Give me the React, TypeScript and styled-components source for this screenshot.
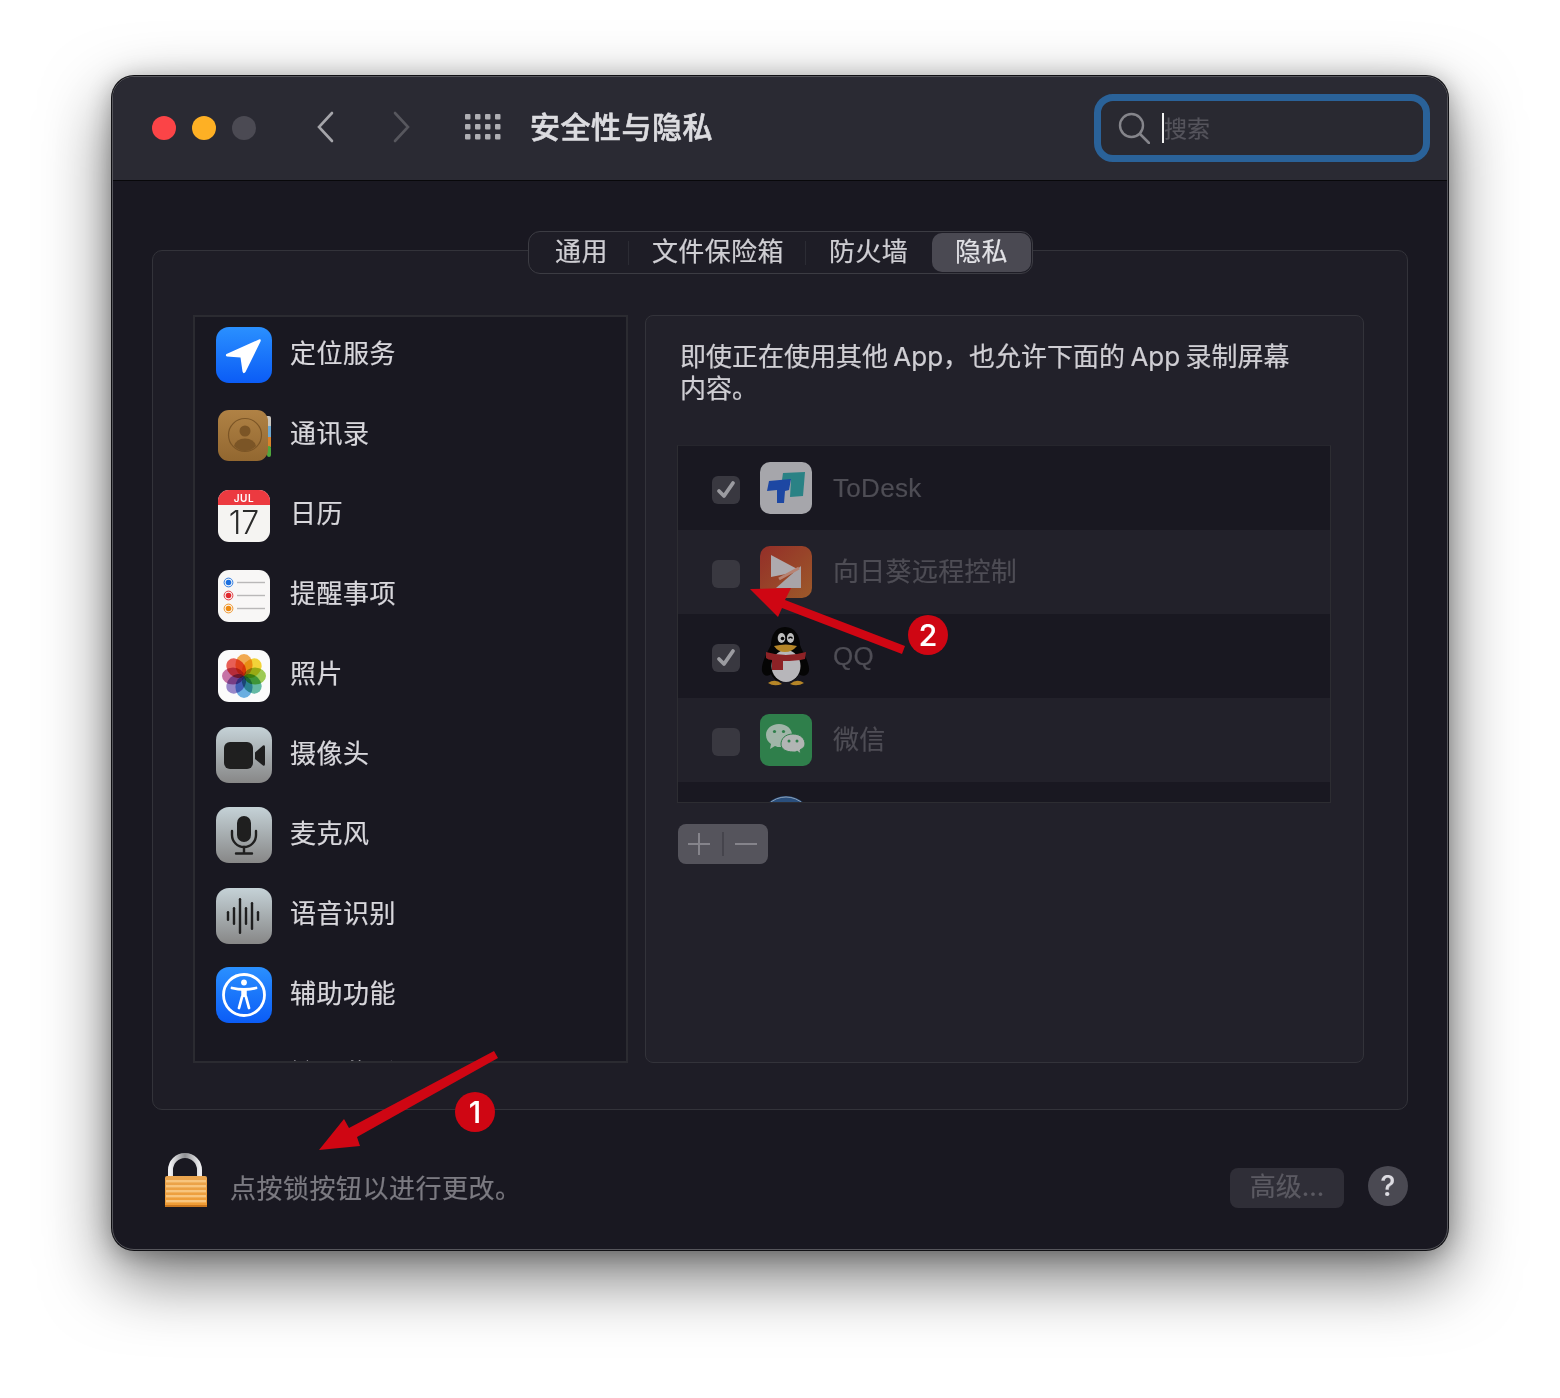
import React from 'react';
import styled, { createGlobalStyle } from 'styled-components';

const GlobalStyle = createGlobalStyle`
  * { box-sizing: border-box; }
  html, body { margin: 0; background: #fff; }
  body { font-family: Inter, "Noto Sans CJK SC", sans-serif; -webkit-text-stroke: 0.2px; }
`;

const Page = styled.div`
  width: 1560px;
  height: 1398px;
  padding: 76px 112px 0;
  overflow: hidden;
  background: #fff;
`;

const Window = styled.div`
  position: relative;
  display: flex;
  flex-direction: column;
  width: 1336px;
  height: 1174px;
  border: 1px solid #56565c;
  border-radius: 22px;
  background: #191821;
  box-shadow: 0 0 0 1px #101014, 0 26px 68px rgba(0, 0, 0, 0.55), 0 4px 24px rgba(0, 0, 0, 0.3);
`;

const TitleBar = styled.header`
  display: flex;
  align-items: center;
  flex: none;
  height: 104px;
  padding: 0 17px 2px 39px;
  background: #2a2a33;
  border-bottom: 1px solid #08080a;
  border-radius: 21px 21px 0 0;
`;

const Lights = styled.div`
  display: flex;
  gap: 16px;
  margin: 1px 60px 0 0;
`;

const Light = styled.span<{ $color: string }>`
  width: 24px;
  height: 24px;
  border-radius: 50%;
  background: ${(p) => p.$color};
`;

const NavButton = styled.svg<{ $gap: number }>`
  flex: none;
  display: block;
  margin: -1px ${(p) => p.$gap}px 0 0;
`;

const Title = styled.h1`
  margin: -2px 0 0 29px;
  font-size: 30px;
  line-height: 40px;
  font-weight: 500;
  letter-spacing: 0.5px;
  color: #dcdce0;
  -webkit-text-stroke: 0.6px #dcdce0;
`;

const Search = styled.div`
  display: flex;
  align-items: center;
  width: 336px;
  height: 68px;
  margin-left: auto;
  padding-left: 17px;
  border: 7px solid #2a6299;
  border-radius: 19px;
  background: #292931;
`;

const SearchGlyph = styled.svg`
  flex: none;
  display: block;
`;

const Caret = styled.span`
  width: 2px;
  height: 30px;
  margin: 0 0 0 12px;
  background: #f2f2f2;
`;

const SearchHint = styled.span`
  font-size: 23px;
  line-height: 30px;
  margin-top: 2px;
  color: #55545c;
`;

const Content = styled.main`
  flex: 1;
  display: flex;
  flex-direction: column;
  padding: 69px 39px 0;
`;

const Panel = styled.section`
  display: flex;
  flex-direction: column;
  align-items: center;
  width: 1256px;
  height: 860px;
  border: 1px solid #33333a;
  border-radius: 10px;
  background: #1e1d26;
`;

const Tabs = styled.nav`
  display: flex;
  align-items: center;
  flex: none;
  height: 43px;
  margin: -20px 0 0 1px;
  padding: 0 1px;
  border: 1px solid #3c3c43;
  border-radius: 12px;
  background: #1e1d26;
`;

const Tab = styled.span<{ $active?: boolean; $divider?: boolean; $pad: string }>`
  position: relative;
  height: 39px;
  padding: ${(p) => p.$pad};
  font-size: 26px;
  line-height: 37px;
  letter-spacing: 0.4px;
  color: ${(p) => (p.$active ? '#e2e2e6' : '#cfced3')};
  background: ${(p) => (p.$active ? '#4a4952' : 'transparent')};
  border-radius: 10px;
  ${(p) =>
    p.$divider &&
    `&::after {
      content: '';
      position: absolute;
      right: 0;
      top: 8px;
      height: 24px;
      width: 1px;
      background: #2c2c34;
    }`}
`;

const Columns = styled.div`
  display: flex;
  gap: 17px;
  width: 100%;
  height: 748px;
  margin-top: 41px;
  padding: 0 43px 0 40px;
`;

const PrivacyList = styled.ul`
  flex: none;
  width: 435px;
  height: 748px;
  margin: 0;
  padding: 0;
  list-style: none;
  overflow: hidden;
  border: 2px solid #2b2b31;
  background: #191821;
`;

const PrivacyRow = styled.li`
  display: flex;
  align-items: center;
  gap: 18px;
  height: 80px;
  padding-left: 21px;

  &:first-child {
    margin-top: -2px;
  }
`;

const RowIcon = styled.svg`
  flex: none;
  display: block;
  overflow: visible;
`;

const RowLabel = styled.span`
  font-size: 26px;
  line-height: 32px;
  letter-spacing: 0.5px;
  margin-top: -2px;
  color: #d8d7dc;
`;

const Detail = styled.div`
  flex: 1;
  height: 748px;
  border: 1px solid #33333a;
  border-radius: 8px;
  background: #22212a;
  padding: 25px 0 0 31px;
`;

const Explain = styled.p`
  margin: 0 0 0 3px;
  width: 624px;
  font-size: 26px;
  line-height: 32px;
  word-spacing: -2px;
  color: #d0cfd4;
`;

const AppTable = styled.div`
  width: 654px;
  height: 358px;
  margin-top: 40px;
  overflow: hidden;
  border: 1px solid #2d2d32;
  border-top-color: #26262d;
  background: #191821;
`;

const AppRow = styled.div<{ $alt?: boolean }>`
  display: flex;
  align-items: center;
  height: 84px;
  padding-left: 34px;
  background: ${(p) => (p.$alt ? '#22212a' : '#191821')};
`;

const Check = styled.span`
  display: flex;
  align-items: center;
  justify-content: center;
  flex: none;
  width: 28px;
  height: 28px;
  margin: 3px 20px 0 0;
  border-radius: 6px;
  background: #393840;
`;

const CheckSpacer = styled.span`
  flex: none;
  width: 48px;
`;

const AppName = styled.span`
  margin: 0 0 0 21px;
  font-family: "Liberation Sans", "Noto Sans CJK SC", sans-serif;
  font-size: 26px;
  line-height: 32px;
  letter-spacing: 0.3px;
  color: #4e4d55;
`;

const PlusMinus = styled.svg`
  display: block;
  width: 90px;
  height: 40px;
  margin: 21px 0 0 1px;
  border-radius: 8px;
  background: #55545c;
`;

const Footer = styled.footer`
  flex: 1;
  display: flex;
  align-items: flex-start;
  padding: 43px 0 0 13px;
`;

const LockGlyph = styled.svg`
  flex: none;
  display: block;
`;

const LockHint = styled.span`
  margin: 20px 0 0 23px;
  font-size: 26px;
  line-height: 32px;
  letter-spacing: 0.5px;
  color: #7c7b82;
`;

const Advanced = styled.span`
  width: 114px;
  height: 40px;
  margin: 15px 0 0 auto;
  border-radius: 8px;
  background: #2f2e37;
  font-size: 26px;
  line-height: 37px;
  text-align: center;
  color: #5b5a62;
`;

const Help = styled.span`
  width: 40px;
  height: 40px;
  margin: 13px 0 0 24px;
  border-radius: 50%;
  background: #4a4952;
  font-size: 28px;
  font-weight: 500;
  line-height: 40px;
  text-align: center;
  color: #dddce2;
`;

// the two red callouts drawn on top of the screenshot
const Callout = styled.svg`
  position: absolute;
  left: 0;
  top: 0;
  pointer-events: none;
`;

const Badge = styled.span<{ $left: number; $top: number }>`
  position: absolute;
  left: ${(p) => p.$left}px;
  top: ${(p) => p.$top}px;
  width: 40px;
  height: 40px;
  border-radius: 50%;
  background: #cf0613;
  font-size: 30px;
  font-weight: 500;
  line-height: 40px;
  text-align: center;
  color: #fff;
`;

const LocationIcon = () => (
  <RowIcon width="56" height="56" viewBox="0 0 56 56">
    <defs>
      <linearGradient id="blue" x1="0" y1="0" x2="0" y2="1">
        <stop offset="0" stopColor="#2a90ff" />
        <stop offset="1" stopColor="#0b5cf6" />
      </linearGradient>
    </defs>
    <rect width="56" height="56" rx="13" fill="url(#blue)" />
    <path d="M10.5 27 L43 12.5 Q45.5 11.8 44.5 14.5 L29.5 45 Q27.5 47.5 26.5 44.5 L24.5 30.5 L11 29.5 Q9 28.5 10.5 27Z" fill="#fff" />
  </RowIcon>
);

const ContactsIcon = () => (
  <RowIcon width="56" height="56" viewBox="0 -3 56 56">
    <defs>
      <linearGradient id="leather" x1="0" y1="0" x2="0" y2="1">
        <stop offset="0" stopColor="#b08245" />
        <stop offset="1" stopColor="#926730" />
      </linearGradient>
    </defs>
    <rect x="48" y="6" width="7" height="12" rx="2" fill="#c9c5bd" />
    <rect x="51" y="16" width="4" height="12" fill="#6fa8d0" />
    <rect x="51" y="27" width="4" height="10" fill="#d9822b" />
    <rect x="51" y="36" width="4" height="11" rx="2" fill="#4fa63c" />
    <rect x="2" y="0" width="50" height="51" rx="11" fill="url(#leather)" />
    <circle cx="29" cy="25" r="16.5" fill="none" stroke="#7b5526" strokeWidth="1.2" />
    <circle cx="29" cy="21" r="5.5" fill="#7b5526" />
    <path d="M18 36 Q20 28.5 29 28.5 Q38 28.5 40 36 Q35 41 29 41 Q23 41 18 36Z" fill="#7b5526" />
  </RowIcon>
);

const CalendarIcon = () => (
  <RowIcon width="56" height="56" viewBox="0 -1 56 56">
    <rect x="2" y="2" width="52" height="52" rx="11" fill="#f5f4f2" />
    <path d="M2 17 V13 a11 11 0 0 1 11 -11 H43 a11 11 0 0 1 11 11 V17Z" fill="#ec3a40" />
    <text x="28" y="13.5" textAnchor="middle" fontSize="10" fontWeight="600" letterSpacing="0.6" fill="#fff" fontFamily="Inter, sans-serif">JUL</text>
    <text x="28" y="46" textAnchor="middle" fontSize="32" fontWeight="300" fill="#2b2b2b" fontFamily="Inter, sans-serif">17</text>
  </RowIcon>
);

const RemindersIcon = () => (
  <RowIcon width="56" height="56" viewBox="0 -1 56 56">
    <rect x="2" y="2" width="52" height="52" rx="11" fill="#f8f7f6" />
    {[
      { y: 14.5, c: '#1a6fe0' },
      { y: 27.5, c: '#e0282e' },
      { y: 40.5, c: '#ee8a12' },
    ].map((r) => (
      <g key={r.y}>
        <circle cx="12.5" cy={r.y} r="2.8" fill={r.c} />
        <circle cx="12.5" cy={r.y} r="4.4" fill="none" stroke={r.c} strokeWidth="0.9" />
        <rect x="21" y={r.y - 0.7} width="28" height="1.4" fill="#b9b8b8" />
      </g>
    ))}
  </RowIcon>
);

const PETALS = ['#f4a13a', '#f5d21e', '#93c83e', '#4fb39a', '#58a6e2', '#8c79c6', '#c2629d', '#ea4a3f'];

const PhotosIcon = () => (
  <RowIcon width="56" height="56" viewBox="0 -1 56 56">
    <rect x="2" y="2" width="52" height="52" rx="11" fill="#fbfbfb" />
    {PETALS.map((c, i) => (
      <ellipse key={c} cx="28" cy="17" rx="8.6" ry="11" fill={c} opacity="0.88" transform={`rotate(${i * 45} 28 28)`} style={{ mixBlendMode: 'multiply' }} />
    ))}
  </RowIcon>
);

const GreyTile = ({ children, id, dy = 0 }: { children: React.ReactNode; id: string; dy?: number }) => (
  <RowIcon width="56" height="56" viewBox={`0 ${dy} 56 56`}>
    <defs>
      <linearGradient id={id} x1="0" y1="0" x2="0" y2="1">
        <stop offset="0" stopColor="#c5d2d7" />
        <stop offset="1" stopColor="#878787" />
      </linearGradient>
    </defs>
    <rect width="56" height="56" rx="13" fill={`url(#${id})`} />
    {children}
  </RowIcon>
);

const CameraIcon = () => (
  <GreyTile id="cam">
    <rect x="8" y="15" width="29" height="27" rx="6" fill="#1f1f1f" />
    <path d="M39 25.5 L47 18.5 Q49 17.5 49 20 V37 Q49 39.5 47 38.5 L39 32Z" fill="#1f1f1f" />
  </GreyTile>
);

const MicIcon = () => (
  <GreyTile id="mic">
    <rect x="21" y="9" width="14" height="26" rx="7" fill="#1f1f1f" />
    <path d="M16 24 V28 a12 12 0 0 0 24 0 V24" fill="none" stroke="#1f1f1f" strokeWidth="2.4" strokeLinecap="round" />
    <path d="M28 40 V46 M20 46.5 H36" fill="none" stroke="#1f1f1f" strokeWidth="2.4" strokeLinecap="round" />
  </GreyTile>
);

const SpeechIcon = () => (
  <GreyTile id="speech" dy={-1}>
    {[
      { x: 12, h: 10 },
      { x: 18, h: 18 },
      { x: 24, h: 36 },
      { x: 30, h: 18 },
      { x: 36, h: 28 },
      { x: 42, h: 10 },
    ].map((b) => (
      <rect key={b.x} x={b.x - 1.2} y={28 - b.h / 2} width="2.4" height={b.h} rx="1.2" fill="#1f1f1f" />
    ))}
  </GreyTile>
);

const AccessIcon = () => (
  <RowIcon width="56" height="56" viewBox="0 0 56 56">
    <defs>
      <linearGradient id="blue2" x1="0" y1="0" x2="0" y2="1">
        <stop offset="0" stopColor="#2a90ff" />
        <stop offset="1" stopColor="#0b5cf6" />
      </linearGradient>
    </defs>
    <rect width="56" height="56" rx="13" fill="url(#blue2)" />
    <circle cx="28" cy="28" r="20.5" fill="none" stroke="#fff" strokeWidth="2.8" />
    <circle cx="28" cy="15.5" r="2.9" fill="#fff" />
    <path d="M16 21 Q28 24 40 21" fill="none" stroke="#fff" strokeWidth="2.8" strokeLinecap="round" />
    <path d="M28 23 V30" fill="none" stroke="#fff" strokeWidth="5.5" />
    <path d="M26 30 L23 41 M30 30 L33 41" fill="none" stroke="#fff" strokeWidth="2.8" strokeLinecap="round" />
  </RowIcon>
);

const BlankIcon = () => <RowIcon width="56" height="56" />;

const PRIVACY = [
  { label: '定位服务', Icon: LocationIcon },
  { label: '通讯录', Icon: ContactsIcon },
  { label: '日历', Icon: CalendarIcon },
  { label: '提醒事项', Icon: RemindersIcon },
  { label: '照片', Icon: PhotosIcon },
  { label: '摄像头', Icon: CameraIcon },
  { label: '麦克风', Icon: MicIcon },
  { label: '语音识别', Icon: SpeechIcon },
  { label: '辅助功能', Icon: AccessIcon },
  { label: '输入监听', Icon: BlankIcon },
];

const ToDeskIcon = () => (
  <RowIcon width="52" height="52" viewBox="0 0 52 52">
    <rect width="52" height="52" rx="10" fill="#a6a6ab" />
    <path d="M23 11 L45 10 L43 34 L30 35 L31 18 L22 18Z" fill="#2a8285" />
    <path d="M9 19 L31 17 L29 28 L25 29 L24 41 L17 41 L17 28 L7 29Z" fill="#1d47a3" />
  </RowIcon>
);

const SunloginIcon = () => (
  <RowIcon width="52" height="52" viewBox="0 0 52 52">
    <defs>
      <linearGradient id="sun" x1="0" y1="0" x2="1" y2="1">
        <stop offset="0" stopColor="#942e28" />
        <stop offset="1" stopColor="#9c5a2a" />
      </linearGradient>
    </defs>
    <rect width="52" height="52" rx="10" fill="url(#sun)" />
    <path d="M11 9 L41 25 L11 31Z" fill="#aeaaae" />
    <path d="M41 20 V42 H16Z" fill="#a8a4a8" />
    <path d="M19 33 L39 22" stroke="#b78272" strokeWidth="3" />
  </RowIcon>
);

const QQIcon = () => (
  <RowIcon width="52" height="62" viewBox="0 0 52 62">
    <path d="M25 2 C15 2 11 11 11 20 C7 28 1 38 2 46 C3 51 8 52 11 49 C13 54 18 57 25 57 C32 57 37 54 39 49 C42 52 48 51 49 46 C50 38 43 28 40 20 C40 11 35 2 25 2Z" fill="#050505" />
    <ellipse cx="26" cy="41" rx="14.5" ry="16" fill="#b7b6ba" />
    <ellipse cx="21.5" cy="13" rx="3.8" ry="5" fill="#bdbdbd" />
    <ellipse cx="30.5" cy="13" rx="3.6" ry="5" fill="#bdbdbd" />
    <circle cx="22.5" cy="13.5" r="1.8" fill="#050505" />
    <path d="M28.5 13.5 Q30.5 11 32.5 13.5" fill="none" stroke="#050505" strokeWidth="1.3" />
    <path d="M14 21 Q26 18 37 21 Q32 27 25 27 Q18 27 14 21Z" fill="#b58527" />
    <path d="M6 27 Q26 33 46 27 L45 34 Q36 36 23 36 V45 H12 V35 Q8 35 6 33Z" fill="#8d2226" />
    <path d="M8 58 Q15 53 22 59 Q14 62 8 58Z M30 59 Q37 53 44 58 Q37 62 30 59Z" fill="#b58527" />
  </RowIcon>
);

const WeChatIcon = () => (
  <RowIcon width="52" height="52" viewBox="0 0 52 52">
    <rect width="52" height="52" rx="9" fill="#2f7f4b" />
    <path d="M19 10 C11 10 6 15 6 21 C6 25 8 28 11 30 L10 35 L15 32 C17 33 18 33 20 33 C28 33 32 27 32 21 C32 15 27 10 19 10Z" fill="#a0b5a8" />
    <circle cx="14.5" cy="17.5" r="1.6" fill="#2f7f4b" />
    <circle cx="23.5" cy="17.5" r="1.6" fill="#2f7f4b" />
    <path d="M33 20 C25 20 21 25 21 30 C21 35 26 38 33 38 C35 38 36 38 37 37 L41 40 L40 36 C43 34 45 33 45 30 C45 25 41 20 33 20Z" fill="#b2b5b4" stroke="#2f7f4b" strokeWidth="1" />
    <circle cx="29" cy="27" r="1.5" fill="#2f7f4b" />
    <circle cx="37" cy="27" r="1.5" fill="#2f7f4b" />
  </RowIcon>
);

const UnknownIcon = () => (
  <RowIcon width="52" height="52" viewBox="0 2 52 52">
    <circle cx="26" cy="26" r="26" fill="#2a4f7d" />
    <circle cx="26" cy="26" r="25" fill="none" stroke="#8ba0b8" strokeWidth="1" />
  </RowIcon>
);

const APPS = [
  { name: 'ToDesk', checked: true, Icon: ToDeskIcon },
  { name: '向日葵远程控制', checked: false, Icon: SunloginIcon },
  { name: 'QQ', checked: true, Icon: QQIcon },
  { name: '微信', checked: false, Icon: WeChatIcon },
  { name: '', checked: false, Icon: UnknownIcon, hideCheck: true },
];

const CheckMark = () => (
  <svg width="22" height="20" viewBox="0 0 22 20">
    <path d="M4 11 L9 16 L18 3" fill="none" stroke="#9b9ba0" strokeWidth="3.8" strokeLinecap="round" strokeLinejoin="round" />
  </svg>
);

const Lock = () => (
  <LockGlyph width="42" height="54" viewBox="0 0 42 54">
    <defs>
      <linearGradient id="shackle" x1="0" y1="0" x2="1" y2="0">
        <stop offset="0" stopColor="#f0f0f2" />
        <stop offset="0.5" stopColor="#8f9094" />
        <stop offset="1" stopColor="#ececee" />
      </linearGradient>
      <linearGradient id="lockbody" x1="0" y1="0" x2="0" y2="1">
        <stop offset="0" stopColor="#eaa550" />
        <stop offset="1" stopColor="#f09c34" />
      </linearGradient>
    </defs>
    <path d="M5.5 24 V17 a14.5 14.5 0 0 1 29 0 V24" fill="none" stroke="url(#shackle)" strokeWidth="5" />
    <rect x="0" y="23" width="42" height="31" rx="2" fill="url(#lockbody)" />
    {[27, 32, 37, 42, 47].map((y) => (
      <rect key={y} x="1" y={y} width="40" height="2.4" fill="#f8c57e" />
    ))}
    <rect x="0" y="52" width="42" height="2" fill="#c9771f" />
  </LockGlyph>
);

export default function App() {
  return (
    <Page>
      <GlobalStyle />
      <Window>
        <TitleBar>
          <Lights>
            <Light $color="#fb4447" />
            <Light $color="#feb024" />
            <Light $color="#4b4a53" />
          </Lights>
          <NavButton $gap={55} width="20" height="32" viewBox="0 0 20 32">
            <path d="M16 2 L3 16 L16 30" fill="none" stroke="#a5a5aa" strokeWidth="2.6" strokeLinecap="round" />
          </NavButton>
          <NavButton $gap={54} width="20" height="32" viewBox="0 0 20 32">
            <path d="M4 2 L17 16 L4 30" fill="none" stroke="#57575e" strokeWidth="2.6" strokeLinecap="round" />
          </NavButton>
          <NavButton $gap={0} width="36" height="26" viewBox="0 0 36 26">
            {[0, 10, 20].map((y) =>
              [0, 10, 20, 30].map((x) => <rect key={`${x}-${y}`} x={x} y={y} width="5.5" height="5.5" rx="1" fill="#aeaeb3" />),
            )}
          </NavButton>
          <Title>安全性与隐私</Title>
          <Search>
            <SearchGlyph width="32" height="32" viewBox="0 0 32 32">
              <circle cx="13.5" cy="13.5" r="11.5" fill="none" stroke="#85858b" strokeWidth="2.4" />
              <path d="M22 22 L31 31" stroke="#85858b" strokeWidth="2.6" strokeLinecap="round" />
            </SearchGlyph>
            <Caret />
            <SearchHint>搜索</SearchHint>
          </Search>
        </TitleBar>
        <Content>
          <Panel>
            <Tabs>
              <Tab $divider $pad="0 21px 0 25px">通用</Tab>
              <Tab $divider $pad="0 22px 0 23px">文件保险箱</Tab>
              <Tab $pad="0 24px 0 23px">防火墙</Tab>
              <Tab $active $pad="0 23px">隐私</Tab>
            </Tabs>
            <Columns>
              <PrivacyList>
                {PRIVACY.map(({ label, Icon }) => (
                  <PrivacyRow key={label}>
                    <Icon />
                    <RowLabel>{label}</RowLabel>
                  </PrivacyRow>
                ))}
              </PrivacyList>
              <Detail>
                <Explain>即使正在使用其他 App，也允许下面的 App 录制屏幕内容。</Explain>
                <AppTable>
                  {APPS.map(({ name, checked, Icon, hideCheck }, i) => (
                    <AppRow key={i} $alt={i % 2 === 1}>
                      {hideCheck ? <CheckSpacer /> : <Check>{checked && <CheckMark />}</Check>}
                      <Icon />
                      <AppName>{name}</AppName>
                    </AppRow>
                  ))}
                </AppTable>
                <PlusMinus viewBox="0 0 90 40">
                  <path d="M21 9 V31 M10 20 H32 M57 20 H79" stroke="#85848b" strokeWidth="2" fill="none" />
                  <path d="M45 8 V32" stroke="#45444c" strokeWidth="2" fill="none" />
                </PlusMinus>
              </Detail>
            </Columns>
          </Panel>
          <Footer>
            <Lock />
            <LockHint>点按锁按钮以进行更改。</LockHint>
            <Advanced>高级...</Advanced>
            <Help>?</Help>
          </Footer>
        </Content>
        <Callout width="1336" height="1174" viewBox="0 0 1336 1174">
          <g transform="translate(-113 -77)" fill="#cf0613">
            <path d="M494 1051 L498 1058 L357 1137 L360 1146 L319 1150 L344 1119 L349 1128Z" />
            <path d="M750 589 L791 588 L785 600 L905 646 L902 654 L782 608 L778 617Z" />
          </g>
        </Callout>
        <Badge $left={342} $top={1015}>1</Badge>
        <Badge $left={795} $top={538}>2</Badge>
      </Window>
    </Page>
  );
}
